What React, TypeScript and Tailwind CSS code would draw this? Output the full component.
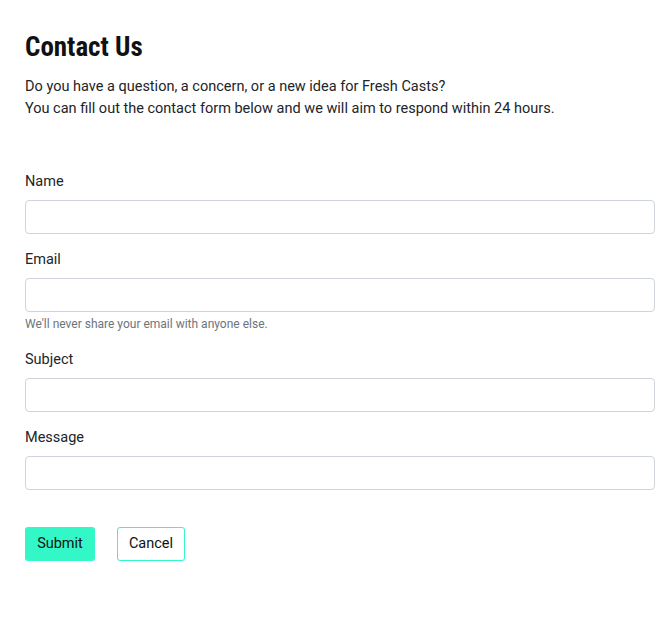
export default function App() {
  const field = (label: string, helper?: string) => (
    <div className="flex flex-col">
      <label className="text-[14.5px] leading-[24px] mb-[6px] pt-[2px] text-[#212529]">{label}</label>
      <input className="h-[34px] w-full rounded-[4px] border border-[#ced4da] bg-white px-3 outline-none" />
      {helper && (
        <div className="mt-[3px] mb-[1px] text-[12px] leading-[18px] text-[#6c757d]">{helper}</div>
      )}
    </div>
  );
  return (
    <div className="min-h-[621px] bg-white pl-[25px] pr-[8px] pt-[30px] text-[#212529]" style={{ fontFamily: "Roboto, 'Liberation Sans', sans-serif" }}>
      <h1
        className="text-[27px] font-bold leading-[34px] text-[#111] mb-[12px]"
        style={{ fontFamily: "'Roboto Condensed', Roboto, sans-serif", fontStretch: "75%" }}
      >
        Contact Us
      </h1>
      <p className="text-[14.5px] leading-[22px]">
        Do you have a question, a concern, or a new idea for Fresh Casts?
        <br />
        You can fill out the contact form below and we will aim to respond within 24 hours.
      </p>
      <form className="mt-[48px] flex flex-col gap-[12px]">
        {field("Name")}
        {field("Email", "We'll never share your email with anyone else.")}
        {field("Subject")}
        {field("Message")}
        <div className="mt-[25px] flex gap-[22px]">
          <button type="button" className="h-[34px] w-[70px] rounded-[3px] bg-[#33f7c6] text-[14.5px] text-[#111]">
            Submit
          </button>
          <button type="button" className="h-[34px] w-[68px] rounded-[3px] border border-[#33f7c6] bg-white text-[14.5px] text-[#111]">
            Cancel
          </button>
        </div>
      </form>
    </div>
  );
}
